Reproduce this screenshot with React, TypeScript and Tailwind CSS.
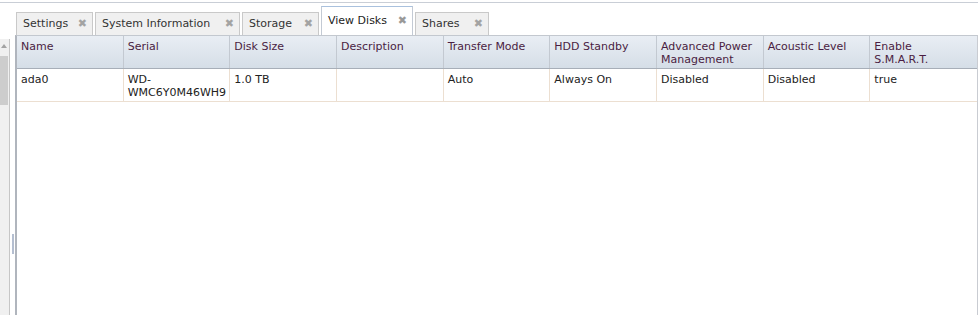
import React from 'react';

const tabs = [
  { label: 'Settings', w: 'w-[77px]' },
  { label: 'System Information', w: 'w-[145px]' },
  { label: 'Storage', w: 'w-[77px]' },
  { label: 'View Disks', w: 'w-[92px]', active: true },
  { label: 'Shares', w: 'w-[74px]' },
];

const columns = [
  'Name',
  'Serial',
  'Disk Size',
  'Description',
  'Transfer Mode',
  'HDD Standby',
  'Advanced Power Management',
  'Acoustic Level',
  'Enable\nS.M.A.R.T.',
];

const rows = [
  ['ada0', 'WD-\nWMC6Y0M46WH9', '1.0 TB', '', 'Auto', 'Always On', 'Disabled', 'Disabled', 'true'],
];

export default function App() {
  return (
    <div className="flex h-[315px] w-[978px] flex-col overflow-hidden bg-white font-['DejaVu_Sans',sans-serif] text-[11px]">
      {/* top edge */}
      <div className="h-[3px] border-b border-[#c9ced6] bg-white" />

      <div className="flex min-h-0 flex-1">
        {/* collapsed left panel with scrollbar */}
        <div className="flex w-[10px] flex-col pt-[36px]">
          <div className="flex flex-1 flex-col border-r border-[#c6c6c6] bg-[#f0f0f0]">
            <div className="flex h-[14px] w-[8px] items-center justify-center">
              <span className="block h-0 w-0 border-x-[3px] border-b-[4px] border-x-transparent border-b-[#a3a3a3]" />
            </div>
            <div className="mt-[3px] h-[49px] w-[8px] bg-[#cdcdcd]" />
          </div>
        </div>

        {/* splitter */}
        <div className="flex w-[5px] justify-center pt-[231px]">
          <div className="h-[20px] w-[2px] bg-[#b4bed0]" />
        </div>

        {/* main tab panel */}
        <div className="flex min-w-0 flex-1 flex-col">
          <div className="flex h-[32px] items-end gap-[2px] pl-[1px]">
            {tabs.map((t) =>
              t.active ? (
                <div
                  key={t.label}
                  className={`${t.w} -mb-[1px] flex h-[30px] items-center justify-between border border-b-0 border-[#c3cad4] border-t-[#a9c1de] bg-white pl-[6px] pr-[5px] text-[#222]`}
                >
                  <span>{t.label}</span>
                  <span className="text-[11px] font-bold text-[#999]">✖</span>
                </div>
              ) : (
                <div
                  key={t.label}
                  className={`${t.w} flex h-[23px] items-center justify-between border border-b-0 border-[#c9c9c9] bg-[#f0f0f0] pl-[6px] pr-[5px] text-[#333]`}
                >
                  <span>{t.label}</span>
                  <span className="text-[11px] font-bold text-[#a3a3a3]">✖</span>
                </div>
              )
            )}
          </div>

          <div className="flex min-h-0 flex-1 flex-col border-l-2 border-r border-t border-[#b0b5bd] border-r-[#c9ccd2] border-t-[#c3c8cf]">
            {/* header */}
            <div className="grid grid-cols-9 border-b border-[#a7aeb8] bg-gradient-to-b from-[#e9eef4] to-[#d5dee7]">
              {columns.map((c, i) => (
                <div
                  key={c}
                  className={`h-[32px] whitespace-pre-line px-[4px] pt-[4px] leading-[13px] text-[#4a1d42] ${i < 8 ? 'border-r border-[#c3c9d1]' : ''}`}
                >
                  {c}
                </div>
              ))}
            </div>

            {/* body */}
            {rows.map((r, ri) => (
              <div key={ri} className="grid grid-cols-9 border-b border-[#ecdfd1]">
                {r.map((v, i) => (
                  <div
                    key={i}
                    className={`h-[32px] whitespace-pre-line px-[4px] pt-[4px] leading-[13px] text-[#222] ${i < 8 ? 'border-r border-[#ecdfd1]' : ''}`}
                  >
                    {v}
                  </div>
                ))}
              </div>
            ))}
            <div className="flex-1" />
          </div>
        </div>
      </div>
    </div>
  );
}
